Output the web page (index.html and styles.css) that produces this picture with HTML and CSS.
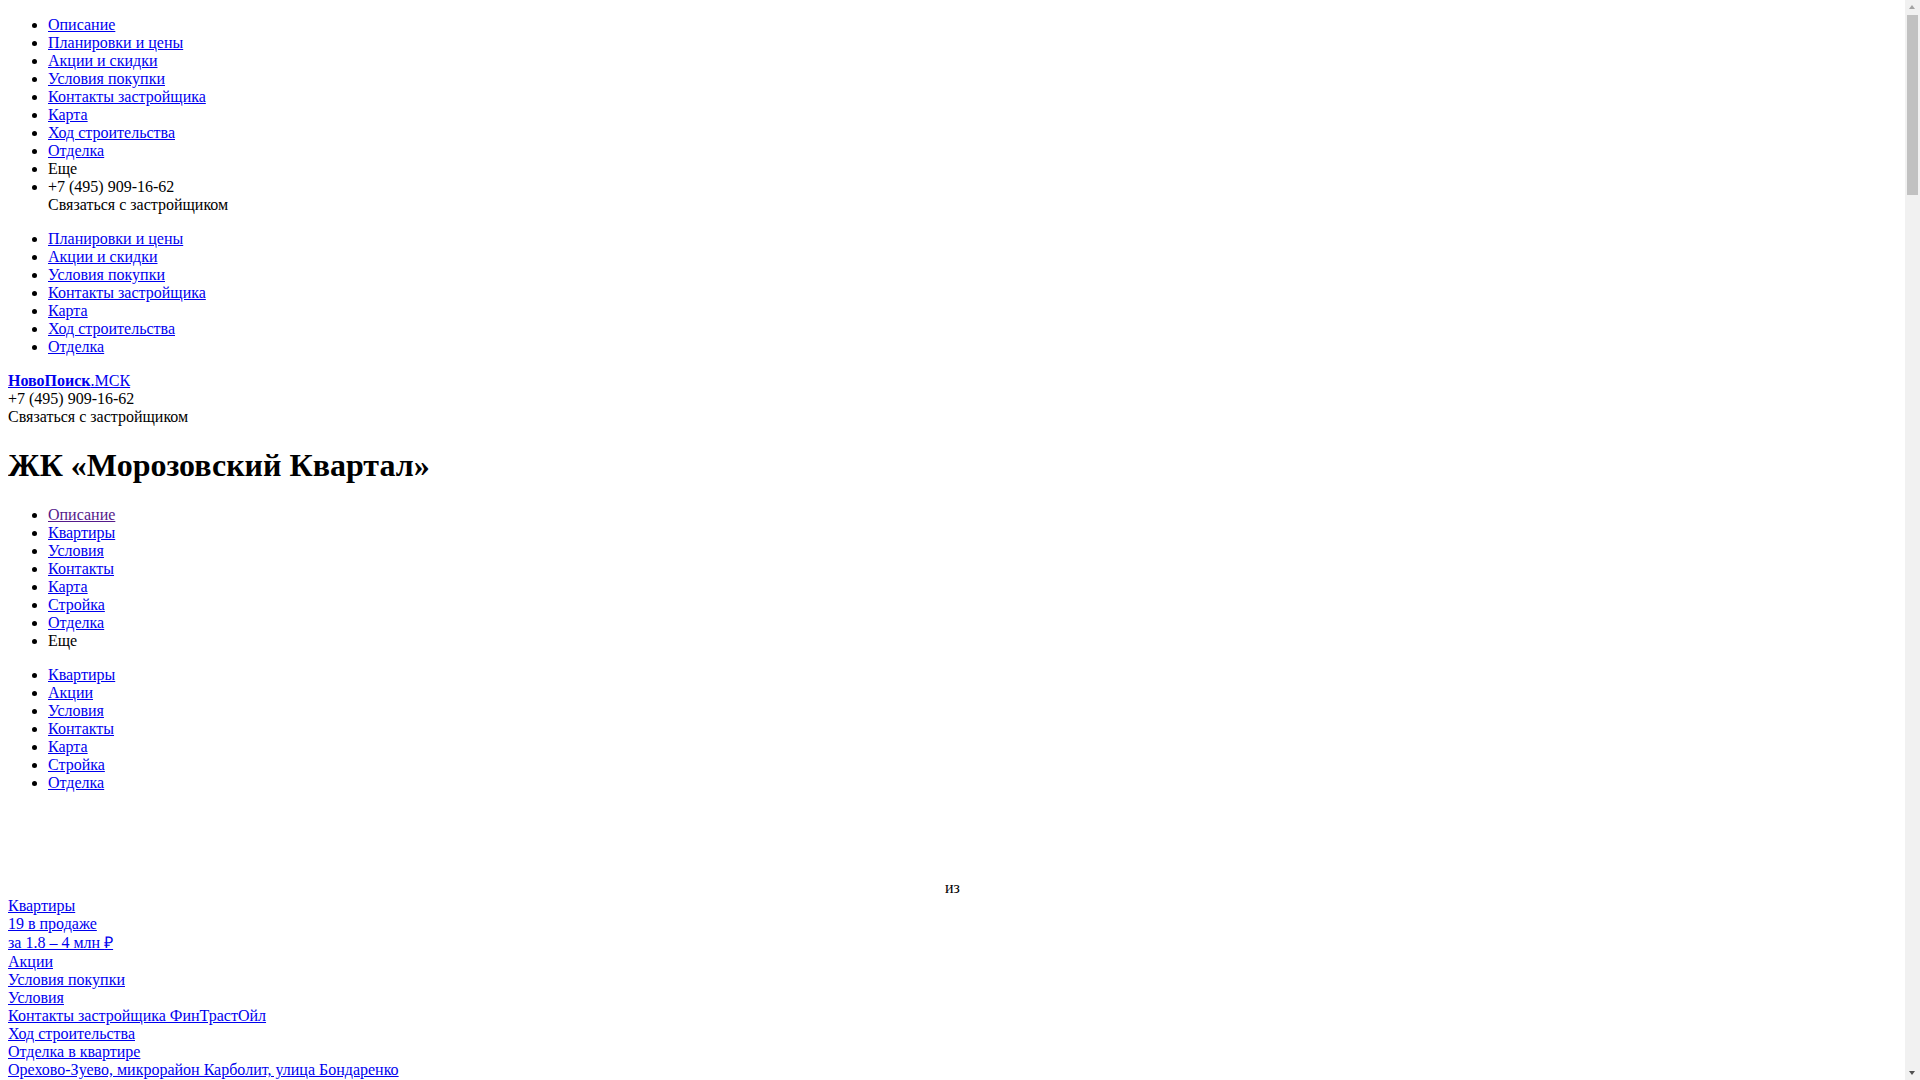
FILE: index.html
```html
<!DOCTYPE html>
<html lang="ru">
<head>
<meta charset="utf-8">
<title>ЖК «Морозовский Квартал»</title>
<link rel="stylesheet" href="styles.css">
</head>
<body>
<header class="top">
  <ul class="menu first">
    <li><a href="#" class="link">Описание</a></li>
    <li><a href="#" class="link">Планировки и цены</a></li>
    <li><a href="#" class="link">Акции и скидки</a></li>
    <li><a href="#" class="link">Условия покупки</a></li>
    <li><a href="#" class="link">Контакты застройщика</a></li>
    <li><a href="#" class="link">Карта</a></li>
    <li><a href="#" class="link">Ход строительства</a></li>
    <li><a href="#" class="link">Отделка</a></li>
    <li>Еще</li>
    <li>+7 (495) 909-16-62<div>Связаться с застройщиком</div></li>
  </ul>
  <ul class="menu">
    <li><a href="#" class="link">Планировки и цены</a></li>
    <li><a href="#" class="link">Акции и скидки</a></li>
    <li><a href="#" class="link">Условия покупки</a></li>
    <li><a href="#" class="link">Контакты застройщика</a></li>
    <li><a href="#" class="link">Карта</a></li>
    <li><a href="#" class="link">Ход строительства</a></li>
    <li><a href="#" class="link">Отделка</a></li>
  </ul>
  <div class="brand">
    <a href="#" class="link"><b>НовоПоиск</b>.МСК</a>
    <div>+7 (495) 909-16-62</div>
    <div>Связаться с застройщиком</div>
  </div>
</header>
<main>
  <h1 class="title">ЖК «Морозовский Квартал»</h1>
  <ul class="menu">
    <li><a href="#" class="link visited">Описание</a></li>
    <li><a href="#" class="link">Квартиры</a></li>
    <li><a href="#" class="link">Условия</a></li>
    <li><a href="#" class="link">Контакты</a></li>
    <li><a href="#" class="link">Карта</a></li>
    <li><a href="#" class="link">Стройка</a></li>
    <li><a href="#" class="link">Отделка</a></li>
    <li>Еще</li>
  </ul>
  <ul class="menu">
    <li><a href="#" class="link">Квартиры</a></li>
    <li><a href="#" class="link">Акции</a></li>
    <li><a href="#" class="link">Условия</a></li>
    <li><a href="#" class="link">Контакты</a></li>
    <li><a href="#" class="link">Карта</a></li>
    <li><a href="#" class="link">Стройка</a></li>
    <li><a href="#" class="link">Отделка</a></li>
  </ul>
  <div class="gallery">
    <div class="gallery-track"></div>
    <div class="gallery-counter">из</div>
  </div>
  <div class="info">
    <a href="#" class="link block">Квартиры</a>
    <a href="#" class="link block">19 в продаже</a>
    <a href="#" class="link block price">за 1.8 – 4 млн <span class="rub">₽</span></a>
    <a href="#" class="link block">Акции</a>
    <a href="#" class="link block">Условия покупки</a>
    <a href="#" class="link block">Условия</a>
    <a href="#" class="link block">Контакты застройщика ФинТрастОйл</a>
    <a href="#" class="link block">Ход строительства</a>
    <a href="#" class="link block">Отделка в квартире</a>
    <a href="#" class="link block">Орехово-Зуево, микрорайон Карболит, улица Бондаренко</a>
  </div>
  <div class="map"></div>
</main>
<div class="scrollbar" aria-hidden="true">
  <div class="sb-btn sb-up"></div>
  <div class="sb-track"><div class="sb-thumb"></div></div>
  <div class="sb-btn sb-down"></div>
</div>
</body>
</html>
```

FILE: styles.css
```css
html {
  background: #ffffff;
}
body {
  margin: 8px 23px 8px 8px;
  font-family: "Liberation Serif", "Times New Roman", serif;
  font-size: 16px;
  color: #000000;
  background: #ffffff;
}
.menu {
  margin: 16px 0;
  padding-left: 40px;
  list-style: disc;
}
.menu.first {
  margin-top: 8px;
}
.link {
  color: #0000ee;
  text-decoration: underline;
}
.link.visited {
  color: #551a8b;
}
.link.block {
  display: block;
}
.price {
  padding-top: 1px;
  padding-bottom: 1px;
}
.rub {
  line-height: 0;
}
.title {
  font-size: 32px;
  font-weight: bold;
  margin: 21.44px 0;
}
.gallery-track {
  height: 71px;
}
.gallery-counter {
  text-align: center;
}
.map {
  height: 420px;
  margin-top: 6px;
  background: linear-gradient(90deg, #eef3ea 0%, #f4f2e6 30%, #eef1f2 55%, #f2f1e8 80%, #eaf2ea 100%);
}

/* fake classic scrollbar, overlaid on the right edge */
.scrollbar {
  position: fixed;
  top: 0;
  right: 0;
  bottom: 0;
  width: 15px;
  background: #f1f1f1;
  display: flex;
  flex-direction: column;
}
.sb-btn {
  height: 15px;
  flex: none;
  position: relative;
}
.sb-btn::after {
  content: "";
  position: absolute;
  left: 4px;
  width: 0;
  height: 0;
  border-left: 3.5px solid transparent;
  border-right: 3.5px solid transparent;
}
.sb-up::after {
  top: 5px;
  border-bottom: 4px solid #a3a3a3;
}
.sb-down::after {
  top: 6px;
  border-top: 4px solid #505050;
}
.sb-track {
  flex: 1;
  padding: 0 2px;
}
.sb-thumb {
  height: 180px;
  background: #c1c1c1;
}
```
